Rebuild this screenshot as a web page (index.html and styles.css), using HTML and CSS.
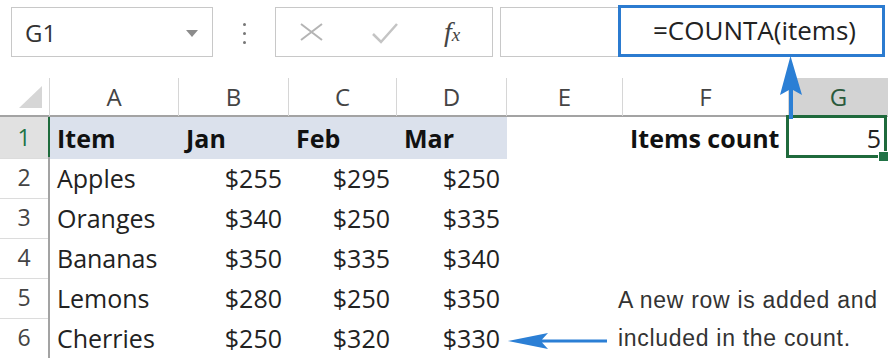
FILE: index.html
```html
<!DOCTYPE html>
<html lang="en">
<head>
    <meta charset="UTF-8">
    <title>COUNTA items</title>
    <link rel="stylesheet" href="styles.css">
</head>
<body>
<div class="page">
    <!-- name box and formula bar -->
    <div class="toolbar">
        <div class="namebox">
            <span>G1</span>
            <svg class="dropdown" width="12" height="7" viewBox="0 0 12 7"><polygon points="0,0 12,0 6,7" fill="#8c8c8c"/></svg>
        </div>
        <div class="dots"><span></span><span></span><span></span></div>
        <div class="fbuttons">
            <svg class="ico-x" width="23" height="18" viewBox="0 0 23 18"><path d="M1 1 L22 17 M22 1 L1 17" stroke="#b4b4b4" stroke-width="2" fill="none"/></svg>
            <svg class="ico-check" width="26" height="21" viewBox="0 0 26 21"><path d="M1 11 L9 19 L25 1" stroke="#c4c4c4" stroke-width="2.5" fill="none"/></svg>
            <span class="fx"><i>f</i><i class="sub">x</i></span>
        </div>
        <div class="fbar-empty"></div>
        <div class="fbar-formula">=COUNTA(items)</div>
    </div>

    <!-- worksheet -->
    <div class="sheet">
        <div class="row head">
            <div class="corner"><svg width="24" height="23" viewBox="0 0 24 23"><polygon points="23,0 23,22 0,22" fill="#d6d6d6"/></svg></div>
            <div class="ch">A</div>
            <div class="ch">B</div>
            <div class="ch">C</div>
            <div class="ch">D</div>
            <div class="ch">E</div>
            <div class="ch">F</div>
            <div class="ch active">G</div>
        </div>
        <div class="row">
            <div class="rh active">1</div>
            <div class="c hl b">Item</div>
            <div class="c hl b">Jan</div>
            <div class="c hl b">Feb</div>
            <div class="c hl b">Mar</div>
            <div class="c"></div>
            <div class="c b">Items count</div>
            <div class="c num">5</div>
        </div>
        <div class="row">
            <div class="rh">2</div>
            <div class="c">Apples</div>
            <div class="c num">$255</div>
            <div class="c num">$295</div>
            <div class="c num">$250</div>
            <div class="c"></div><div class="c"></div><div class="c"></div>
        </div>
        <div class="row">
            <div class="rh">3</div>
            <div class="c">Oranges</div>
            <div class="c num">$340</div>
            <div class="c num">$250</div>
            <div class="c num">$335</div>
            <div class="c"></div><div class="c"></div><div class="c"></div>
        </div>
        <div class="row">
            <div class="rh">4</div>
            <div class="c">Bananas</div>
            <div class="c num">$350</div>
            <div class="c num">$335</div>
            <div class="c num">$340</div>
            <div class="c"></div><div class="c"></div><div class="c"></div>
        </div>
        <div class="row">
            <div class="rh">5</div>
            <div class="c">Lemons</div>
            <div class="c num">$280</div>
            <div class="c num">$250</div>
            <div class="c num">$350</div>
            <div class="c"></div><div class="c"></div><div class="c"></div>
        </div>
        <div class="row">
            <div class="rh">6</div>
            <div class="c">Cherries</div>
            <div class="c num">$250</div>
            <div class="c num">$320</div>
            <div class="c num">$330</div>
            <div class="c"></div><div class="c"></div><div class="c"></div>
        </div>

        <!-- selected cell G1 -->
        <div class="selbox"></div>
        <div class="handle"></div>
    </div>

    <!-- callouts -->
    <svg class="arrow-up" width="26" height="64" viewBox="0 0 26 64">
        <polygon points="12.5,1 2,40 11,35 11,64 15,64 15,35 24,40" fill="#2b7fd5"/>
    </svg>
    <svg class="arrow-left" width="100" height="22" viewBox="0 0 100 22">
        <polygon points="1,11 41,3 35,9.5 100,9.5 100,12.5 35,12.5 41,19" fill="#2b7fd5"/>
    </svg>
    <div class="note">A new row is added and<br>included in the count.</div>
</div>
</body>
</html>
```

FILE: styles.css
```css
body {
    margin: 0;
    background: #fff;
    font-family: "Open Sans", "Noto Sans", sans-serif;
    color: #222;
}
.page {
    position: relative;
    width: 888px;
    height: 358px;
    overflow: hidden;
}

/* toolbar */
.toolbar {
    display: flex;
    align-items: flex-start;
    height: 78px;
    padding-top: 7px;
    box-sizing: border-box;
}
.namebox {
    display: flex;
    align-items: center;
    justify-content: space-between;
    width: 202px;
    height: 50px;
    margin-left: 11px;
    padding: 0 14px 0 13px;
    box-sizing: border-box;
    border: 1px solid #c8c8c8;
    font-size: 24px;
    color: #333;
}
.dropdown {
    margin-top: 2px;
}
.dots {
    display: flex;
    flex-direction: column;
    gap: 6px;
    width: 62px;
    align-items: center;
    padding-top: 16px;
}
.dots span {
    width: 3px;
    height: 3px;
    background: #777;
    border-radius: 50%;
}
.fbuttons {
    display: flex;
    align-items: center;
    width: 218px;
    height: 50px;
    padding-left: 24px;
    box-sizing: border-box;
    border: 1px solid #c8c8c8;
}
.ico-check {
    margin-left: 49px;
    margin-top: 2px;
}
.fx {
    margin-left: 46px;
    font-family: "Liberation Serif", serif;
    font-size: 28px;
    color: #444;
}
.fx .sub {
    font-size: 19px;
    letter-spacing: -1px;
}
.fbar-empty {
    width: 118px;
    height: 50px;
    margin-left: 7px;
    box-sizing: border-box;
    border: 1px solid #c8c8c8;
    border-right: none;
}
.fbar-formula {
    width: 267px;
    height: 52px;
    margin-top: -2px;
    box-sizing: border-box;
    border: 3px solid #2b7bd0;
    padding-left: 32px;
    font-size: 26px;
    line-height: 44px;
    color: #222;
}

/* sheet grid */
.sheet {
    position: relative;
}
.row {
    display: grid;
    grid-template-columns: 50px 129px 110px 108px 110px 116px 166px 99px;
    height: 40px;
}
.row.head {
    height: 39px;
    border-bottom: 2px solid #a3a3a3;
    box-sizing: border-box;
}
.corner {
    display: flex;
    align-items: flex-end;
    justify-content: flex-end;
    padding: 0 6px 7px 0;
    border-right: 1px solid #d6d6d6;
}
.ch {
    text-align: center;
    font-size: 24px;
    line-height: 38px;
    color: #444;
    border-right: 1px solid #d6d6d6;
}
.ch.active {
    background: #d3d3d3;
    color: #2a5a3c;
    border-right: none;
}
.rh {
    text-align: center;
    font-size: 23px;
    line-height: 40px;
    color: #444;
    border-right: 2px solid #a3a3a3;
    border-bottom: 1px solid #dcdcdc;
    box-sizing: border-box;
}
.rh.active {
    background: #e1e1e1;
    color: #217346;
    border-right-color: #1e6b3c;
}
.c {
    padding: 0 7px;
    font-size: 25px;
    line-height: 42px;
    white-space: nowrap;
    overflow: visible;
}
.c.b {
    font-weight: 700;
    color: #111;
}
.c.hl {
    background: #dbe1ec;
}
.c.num {
    text-align: right;
}

.selbox {
    position: absolute;
    left: 786px;
    top: 37px;
    width: 101px;
    height: 43px;
    box-sizing: border-box;
    border: 3px solid #1f6a3c;
}
.handle {
    position: absolute;
    left: 878px;
    top: 73px;
    width: 9px;
    height: 9px;
    background: #217346;
    border: 1px solid #fff;
}

/* callouts */
.arrow-up {
    position: absolute;
    left: 778px;
    top: 55px;
}
.arrow-left {
    position: absolute;
    left: 507px;
    top: 330px;
}
.note {
    position: absolute;
    left: 618px;
    top: 281px;
    font-family: "Liberation Sans", Arial, sans-serif;
    font-size: 23px;
    line-height: 38px;
    letter-spacing: 0.7px;
    color: #333;
}
```
